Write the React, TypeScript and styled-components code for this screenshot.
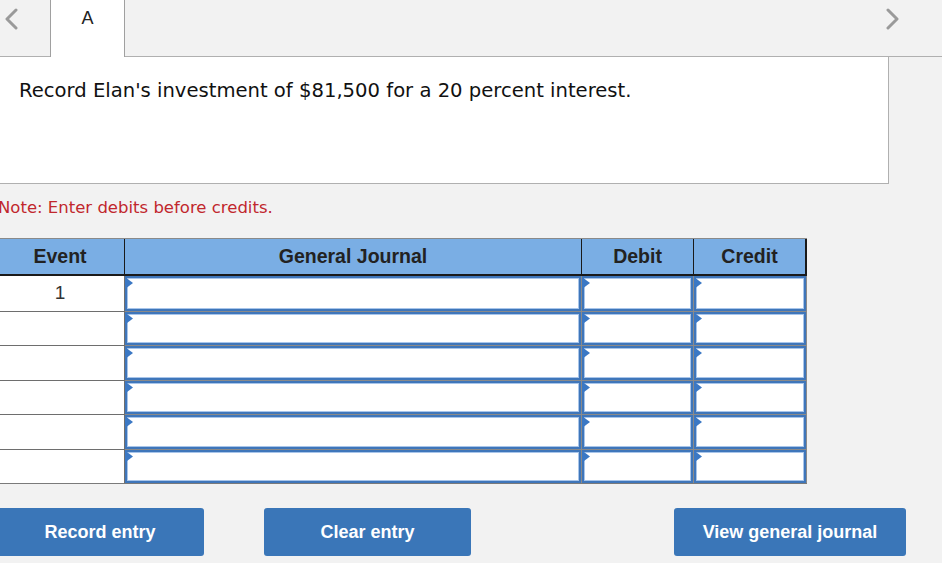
import styled, { createGlobalStyle } from "styled-components";

const Global = createGlobalStyle`
  html, body {
    margin: 0;
    padding: 0;
    background: #ffffff;
    overflow: hidden;
  }
`;

const Screen = styled.div`
  height: 563px;
  background: #f2f2f2;
  overflow: hidden;
`;

const Page = styled.div`
  width: 946px;
  margin-left: -4px;
`;

const TabBar = styled.div`
  display: flex;
  align-items: stretch;
  height: 56px;
  border-bottom: 1px solid #b0b0b0;
`;

const Arrow = styled.button<{ $right?: boolean }>`
  width: 30px;
  padding: 8px 0 0;
  margin-right: ${(p) => (p.$right ? "34px" : "0")};
  border: 0;
  background: transparent;
  display: flex;
  align-items: flex-start;
  justify-content: center;
  svg {
    width: 14px;
    height: 22px;
  }
`;

const Tabs = styled.div`
  display: flex;
  margin-left: 24px;
  flex: 1;
`;

const Tab = styled.div`
  width: 75px;
  margin-bottom: -1px;
  background: #ffffff;
  border-left: 1px solid #a0a0a0;
  border-right: 1px solid #a0a0a0;
  font-family: "Liberation Sans", Arial, sans-serif;
  font-size: 18px;
  color: #222;
  text-align: center;
  padding-top: 8px;
  box-sizing: border-box;
`;

const Question = styled.div`
  width: 893px;
  height: 127px;
  box-sizing: border-box;
  background: #ffffff;
  border: 1px solid #b0b0b0;
  border-top: 0;
  padding: 22px 0 0 22px;
  font-family: "DejaVu Sans", Verdana, sans-serif;
  font-size: 19.6px;
  color: #111;
`;

const Note = styled.div`
  margin-top: 14px;
  padding-left: 2px;
  font-family: "DejaVu Sans", Verdana, sans-serif;
  font-size: 16.5px;
  color: #c1272d;
`;

const Table = styled.div`
  margin-top: 21px;
  width: 811px;
  display: grid;
  grid-template-columns: 129px 457px 112px 113px;
  border-top: 1px solid #8a8a8a;
  border-bottom: 1px solid #7a7a7a;
  font-family: "Liberation Sans", Arial, sans-serif;
`;

const Head = styled.div<{ $last?: boolean }>`
  height: 37px;
  box-sizing: border-box;
  background: #7aaee4;
  border-bottom: 2px solid #1a1a1a;
  border-right: ${(p) => (p.$last ? "2px" : "1px")} solid #1a1a1a;
  display: flex;
  align-items: center;
  justify-content: center;
  font-weight: bold;
  font-size: 19.5px;
  color: #222;
`;

const EventCell = styled.div<{ $first?: boolean }>`
  height: 34.5px;
  box-sizing: border-box;
  background: #ffffff;
  border-right: 1px solid #6e6e6e;
  border-top: ${(p) => (p.$first ? "0" : "1px solid #6e6e6e")};
  display: flex;
  align-items: center;
  justify-content: center;
  font-size: 19px;
  color: #333;
`;

const EntryCell = styled.div<{ $first?: boolean }>`
  height: 34.5px;
  box-sizing: border-box;
  border-right: 1px solid #8a8a8a;
  border-top: ${(p) => (p.$first ? "0" : "1px solid #8a8a8a")};
  background: #ffffff;
  display: flex;
`;

const Field = styled.div`
  position: relative;
  flex: 1;
  background: #ffffff;
  border: 2px solid #3f76ba;
  box-shadow: inset 0 0 0 1px #a8c5ea;
  &::before {
    content: "";
    position: absolute;
    left: -2px;
    top: -1px;
    width: 8px;
    height: 12px;
    background: #3b78c4;
    clip-path: polygon(0 0, 100% 50%, 0 100%);
  }
`;

const Buttons = styled.div`
  display: flex;
  margin-top: 24px;
  width: 910px;
`;

const Action = styled.button<{ $w: number; $gap: number }>`
  width: ${(p) => p.$w}px;
  margin-left: ${(p) => p.$gap}px;
  height: 48px;
  border: 0;
  border-radius: 3px;
  background: #3a76b8;
  color: #ffffff;
  font-family: "Liberation Sans", Arial, sans-serif;
  font-weight: bold;
  font-size: 18px;
`;

const Chevron = ({ dir }: { dir: "left" | "right" }) => (
  <svg viewBox="0 0 14 22">
    <polyline
      points={dir === "left" ? "12,2 3,11 12,20" : "2,2 11,11 2,20"}
      fill="none"
      stroke="#9a9a9a"
      strokeWidth="3"
      strokeLinecap="round"
      strokeLinejoin="round"
    />
  </svg>
);

const rows = ["1", "", "", "", "", ""];

export default function App() {
  return (
    <Screen>
      <Global />
      <Page>
        <TabBar>
          <Arrow>
            <Chevron dir="left" />
          </Arrow>
          <Tabs>
            <Tab>A</Tab>
          </Tabs>
          <Arrow $right>
            <Chevron dir="right" />
          </Arrow>
        </TabBar>
        <Question>Record Elan's investment of $81,500 for a 20 percent interest.</Question>
        <Note>Note: Enter debits before credits.</Note>
        <Table>
          <Head>Event</Head>
          <Head>General Journal</Head>
          <Head>Debit</Head>
          <Head $last>Credit</Head>
          {rows.map((r, i) => [
            <EventCell key={`e${i}`} $first={i === 0}>
              {r}
            </EventCell>,
            <EntryCell key={`g${i}`} $first={i === 0}>
              <Field />
            </EntryCell>,
            <EntryCell key={`d${i}`} $first={i === 0}>
              <Field />
            </EntryCell>,
            <EntryCell key={`c${i}`} $first={i === 0}>
              <Field />
            </EntryCell>,
          ])}
        </Table>
        <Buttons>
          <Action $w={208} $gap={0}>Record entry</Action>
          <Action $w={207} $gap={60}>Clear entry</Action>
          <Action $w={232} $gap={203}>View general journal</Action>
        </Buttons>
      </Page>
    </Screen>
  );
}
